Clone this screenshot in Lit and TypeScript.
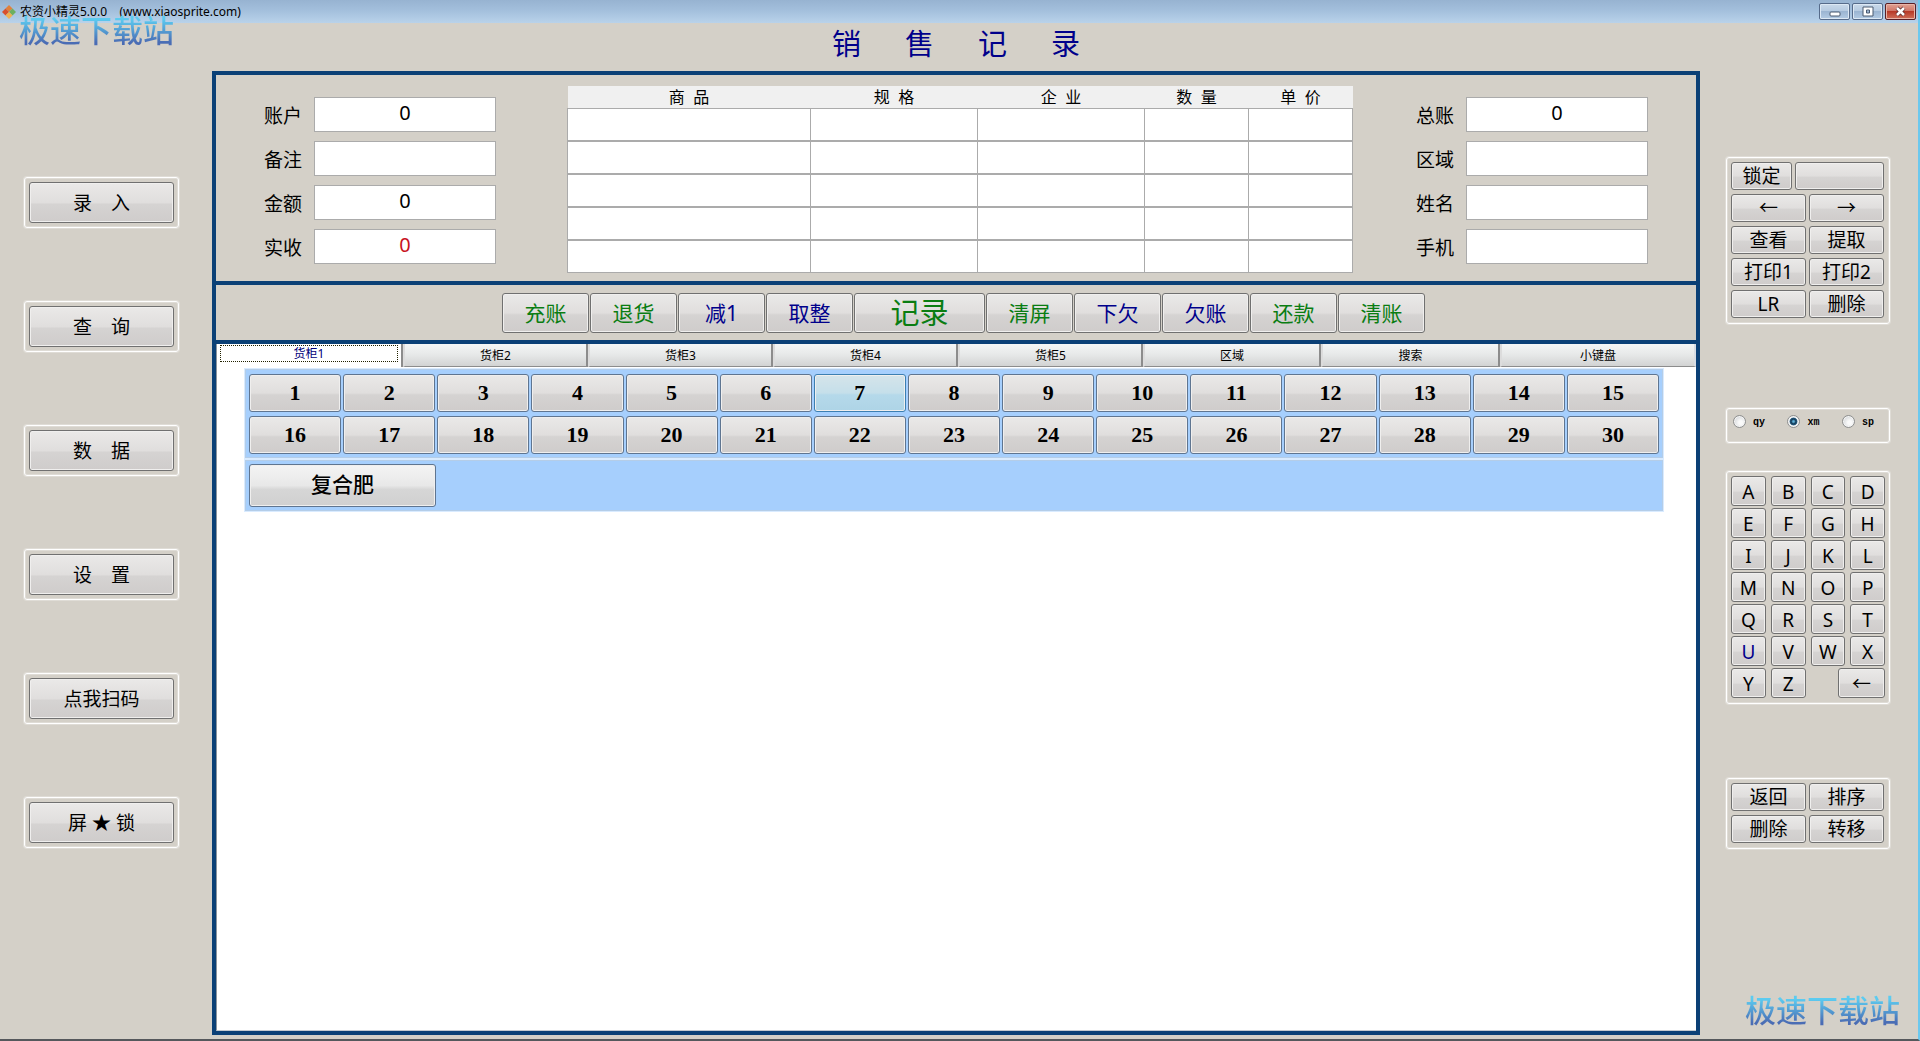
import { LitElement, html, css, nothing } from "lit";
import { customElement, state } from "lit/decorators.js";
import { classMap } from "lit/directives/class-map.js";

interface Field {
  id: string;
  label: string;
  value: string;
  alert?: boolean;
}

const ACCOUNT: Field[] = [
  { id: "account", label: "账户", value: "0" },
  { id: "remark", label: "备注", value: "" },
  { id: "amount", label: "金额", value: "0" },
  { id: "received", label: "实收", value: "0", alert: true },
];

const CUSTOMER: Field[] = [
  { id: "total", label: "总账", value: "0" },
  { id: "area", label: "区域", value: "" },
  { id: "name", label: "姓名", value: "" },
  { id: "phone", label: "手机", value: "" },
];

const MENU = ["录　入", "查　询", "数　据", "设　置", "点我扫码", "屏 ★ 锁"];
const COLUMNS = ["商  品", "规  格", "企  业", "数  量", "单  价"];
const ROWS = [0, 1, 2, 3, 4];

const ACTIONS: { text: string; tone: string }[] = [
  { text: "充账", tone: "green" },
  { text: "退货", tone: "green" },
  { text: "减1", tone: "navy" },
  { text: "取整", tone: "navy" },
  { text: "记录", tone: "green primary" },
  { text: "清屏", tone: "green" },
  { text: "下欠", tone: "navy" },
  { text: "欠账", tone: "navy" },
  { text: "还款", tone: "green" },
  { text: "清账", tone: "green" },
];

const TABS = ["货柜1", "货柜2", "货柜3", "货柜4", "货柜5", "区域", "搜索", "小键盘"];
const SLOTS = Array.from({ length: 30 }, (_, i) => i + 1);
const TOOLS = ["←", "→", "查看", "提取", "打印1", "打印2", "LR", "删除"];
const LETTERS = "ABCDEFGHIJKLMNOPQRSTUVWXYZ".split("");
const EDIT = ["返回", "排序", "删除", "转移"];
const MODES = ["qy", "xm", "sp"];

@customElement("app-root")
export class AppRoot extends LitElement {
  @state() private tab = 0;
  @state() private mode = "xm";

  static styles = css`
    :host {
      display: flex;
      flex-direction: column;
      position: relative;
      min-height: 100vh;
      box-sizing: border-box;
      background: #d4d0c8;
      border-right: 2px solid #6cc8ee;
      border-bottom: 2px solid #55585c;
      color: #000;
      font-family: "Noto Sans", "Noto Sans CJK SC", sans-serif;
      font-size: 19px;
      line-height: 24px;
    }
    * {
      box-sizing: border-box;
    }
    .titlebar {
      display: flex;
      align-items: center;
      height: 23px;
      padding: 0 2px;
      gap: 4px;
      background: linear-gradient(#97b3d1, #a3bfdc 45%, #b9d2ea);
    }
    .logo {
      width: 14px;
      height: 14px;
    }
    .caption {
      flex: 1;
      font-size: 12px;
      line-height: 16px;
      white-space: pre;
    }
    .window-controls {
      display: flex;
      gap: 2px;
    }
    .window-button {
      display: flex;
      align-items: center;
      justify-content: center;
      width: 31px;
      height: 17px;
      padding: 0;
      border: 1px solid #566b8a;
      border-radius: 2px;
      background: linear-gradient(#c9d9ea, #b4c9e0 50%, #9bb5d2 50%, #b3cbe4);
      box-shadow: inset 0 0 0 1px #dce8f4;
    }
    .window-button.close {
      border-color: #5a1f25;
      background: linear-gradient(#e0a294, #cf7263 50%, #b73a28 50%, #d0705a);
      box-shadow: inset 0 0 0 1px #e8b5a8;
    }
    .workspace {
      flex: 1;
      display: grid;
      grid-template-columns: 212px minmax(0, 1fr) 218px;
      padding-bottom: 4px;
    }
    .menu {
      display: flex;
      flex-direction: column;
      gap: 73px;
      padding: 154px 33px 0 24px;
    }
    .group {
      padding: 4px;
      border: 1px solid #fff;
      border-radius: 3px;
      box-shadow: 0 0 0 1px #dfdcd6, inset 0 0 0 1px #dfdcd6;
    }
    .button {
      min-width: 0;
      padding: 0;
      border: 1px solid #707070;
      border-radius: 3px;
      background: linear-gradient(#eae9e8, #e0dedd 50%, #d5d3d2 55%, #cfcccb);
      box-shadow: inset 0 0 0 1px #f0efee;
      color: #000;
      font-family: inherit;
      font-size: 19px;
      line-height: 24px;
      white-space: pre;
    }
    .menu .button {
      display: block;
      width: 100%;
      height: 41px;
    }
    .center {
      display: flex;
      flex-direction: column;
    }
    .heading {
      margin: 0;
      height: 48px;
      color: #00008b;
      font-size: 29px;
      font-weight: 400;
      line-height: 42px;
      text-align: center;
      white-space: pre;
    }
    .frame {
      flex: 1;
      display: flex;
      flex-direction: column;
      border: 4px solid #0b4076;
    }
    .entry {
      display: grid;
      grid-template-columns: auto minmax(0, 1fr) auto;
      align-items: start;
      padding: 11px 48px 8px 48px;
      border-bottom: 4px solid #0b4076;
    }
    .fields {
      display: grid;
      grid-template-columns: auto 182px;
      align-items: center;
      gap: 9px 12px;
      padding-top: 11px;
    }
    .field-label {
      padding-top: 2px;
      text-align: right;
    }
    .field-input {
      width: 100%;
      height: 35px;
      padding: 0 0 4px;
      border: 1px solid #ababab;
      border-radius: 0;
      background: #fff;
      color: #000;
      font-family: inherit;
      font-size: 20px;
      text-align: center;
    }
    .field-input.alert {
      color: #c8141e;
    }
    .table-area {
      padding: 0 63px 0 71px;
    }
    .items {
      width: 100%;
      table-layout: fixed;
      border-collapse: collapse;
    }
    .items th {
      height: 22px;
      padding: 0;
      background: #f0f0f0;
      font-size: 16px;
      font-weight: 400;
      line-height: 20px;
      white-space: pre;
    }
    .items td {
      height: 33px;
      padding: 0;
      border: 1px solid #ababab;
      border-bottom-width: 2px;
      background: #fff;
    }
    .items tr:last-child td {
      height: 32px;
      border-bottom-width: 1px;
    }
    .w-product {
      width: 243px;
    }
    .w-wide {
      width: 167px;
    }
    .w-narrow {
      width: 104px;
    }
    .actions {
      display: flex;
      justify-content: center;
      gap: 1px;
      padding: 8px 0 7px 15px;
      border-bottom: 4px solid #0b4076;
    }
    .actions .button {
      width: 87px;
      height: 40px;
      font-size: 21px;
    }
    .actions .button.primary {
      width: 131px;
      font-size: 29px;
      line-height: 32px;
    }
    .actions .green {
      color: #0a7d12;
    }
    .navy.navy {
      color: #00008b;
    }
    .tabs {
      display: grid;
      grid-template-columns: 187fr 185fr 185fr 185fr 185fr 178fr 179fr 196fr;
      height: 23px;
    }
    .tab {
      padding: 2px 0 0;
      border: 0;
      border-right: 2px solid #8c8c8c;
      border-bottom: 1px solid #8c8c8c;
      border-left: 2px solid #dcdcdc;
      background: linear-gradient(#f4f6f6, #e6e8e8 50%, #d2d3d3);
      color: #000;
      font-family: inherit;
      font-size: 12px;
      line-height: 16px;
    }
    .tab:last-child {
      border-right-color: #d8dde4;
    }
    .tab.selected {
      padding: 1px 3px 4px;
      border-left: 1px solid #8c959e;
      border-bottom: 0;
      background: #fff;
      color: #00007a;
    }
    .tab-text {
      display: block;
    }
    .selected .tab-text {
      border: 1px dotted #222200;
      line-height: 15px;
    }
    .sheet {
      flex: 1;
      padding: 1px 32px 0 27px;
      border-left: 1px solid #8c959e;
      border-bottom: 1px solid #c4cad0;
      background: #fff;
    }
    .tray {
      padding: 4px;
      border: 1px solid #d9ebff;
      background: #a6cffd;
      box-shadow: inset 0 0 0 1px #b4cde8;
    }
    .slots {
      display: grid;
      grid-template-columns: repeat(15, minmax(0, 1fr));
      gap: 4px 2px;
      padding-top: 5px;
    }
    .tray .button {
      height: 38px;
      border-color: #5f7590;
      font-family: "Liberation Serif", "Noto Sans CJK SC", serif;
      font-size: 22px;
      font-weight: 700;
    }
    .tray .button.hot {
      border-color: #3c7fb1;
      background: linear-gradient(#d5e4ea, #c5dfea 50%, #b5d9ea 55%, #aed4e6);
    }
    .tray .button.category {
      width: 187px;
      height: 43px;
      background: linear-gradient(#f4f4f4, #e8e8e8 50%, #d6d6d6 60%, #d0d0d0);
      font-size: 21px;
      font-weight: 500;
    }
    .side {
      display: flex;
      flex-direction: column;
      padding: 134px 28px 0 26px;
    }
    .side .button {
      height: 28px;
    }
    .tools {
      display: grid;
      gap: 4px;
      padding: 4px 5px 5px 4px;
    }
    .lock-row {
      display: grid;
      grid-template-columns: 61px 1fr;
      gap: 3px;
    }
    .pairs {
      display: grid;
      grid-template-columns: 1fr 1fr;
      gap: 4px 3px;
    }
    .modes {
      display: flex;
      align-items: flex-start;
      justify-content: space-between;
      height: 35px;
      margin-top: 84px;
      padding: 6px 15px 0 6px;
    }
    .mode {
      display: flex;
      align-items: flex-start;
      gap: 7px;
      font-family: "Liberation Mono", monospace;
      font-size: 10px;
      font-weight: 700;
      line-height: 16px;
    }
    .radio {
      appearance: none;
      width: 13px;
      height: 13px;
      margin: 0;
      border: 1px solid #8e8f8f;
      border-radius: 50%;
      background: radial-gradient(circle at 60% 60%, #fafafa 20%, #c4c8cc);
      box-shadow: inset 0 0 0 1px #f4f4f4;
    }
    .radio:checked {
      background: radial-gradient(circle, #5fb3dc 8%, #123a58 30%, #24597c 45%, #e8ecef 55%);
    }
    .letters {
      display: grid;
      grid-template-columns: repeat(4, 1fr);
      gap: 2px 5px;
      margin-top: 28px;
      padding-bottom: 5px;
    }
    .letters .button {
      height: 30px;
      padding-top: 2px;
      line-height: 26px;
    }
    .letters .backspace {
      grid-column: 3 / 5;
      justify-self: end;
      width: 47px;
    }
    .edit {
      margin-top: 74px;
      padding: 4px 5px 5px 4px;
    }
    .watermark {
      position: absolute;
      background: linear-gradient(#5ccbf0 20%, #4a6cb4 85%);
      background-clip: text;
      -webkit-background-clip: text;
      color: transparent;
      font-size: 31px;
      font-weight: 500;
      line-height: 36px;
      pointer-events: none;
    }
    .watermark.top {
      top: 12px;
      left: 19px;
    }
    .watermark.bottom {
      right: 18px;
      bottom: 11px;
    }
  `;

  private renderFields(fields: Field[]) {
    return html`<div class="fields">
      ${fields.map(
        (f) => html`<label class="field-label" for=${f.id}>${f.label}</label>
          <input
            id=${f.id}
            type="text"
            class=${classMap({ "field-input": true, alert: !!f.alert })}
            .value=${f.value}
          />`
      )}
    </div>`;
  }

  private renderTitlebar() {
    return html`<header class="titlebar">
      <svg class="logo" viewBox="0 0 14 14" aria-hidden="true">
        <path d="M7 0l3.5 3.5L7 7 3.5 3.5z" fill="#e0803c" />
        <path d="M3.5 3.5L7 7l-3.5 3.5L0 7z" fill="#d8502c" />
        <path d="M10.5 3.5L14 7l-3.5 3.5L7 7z" fill="#6cb060" />
        <path d="M7 7l3.5 3.5L7 14l-3.5-3.5z" fill="#f0b050" />
      </svg>
      <span class="caption">农资小精灵5.0.0    (www.xiaosprite.com)</span>
      <div class="window-controls">
        <button class="window-button" aria-label="最小化">
          <svg width="12" height="10" viewBox="0 0 12 10">
            <rect x="1" y="5" width="10" height="4" rx="1" fill="#fff" stroke="#4a5a70" />
          </svg>
        </button>
        <button class="window-button" aria-label="还原">
          <svg width="12" height="11" viewBox="0 0 12 11">
            <path
              d="M1 1h10v9H1zM4.5 4v3h3V4z"
              fill="#fff"
              fill-rule="evenodd"
              stroke="#4a5a70"
            />
          </svg>
        </button>
        <button class="window-button close" aria-label="关闭">
          <svg width="13" height="11" viewBox="0 0 13 11">
            <path d="M3 2l7 7M10 2l-7 7" stroke="#5a2a2c" stroke-width="4" />
            <path d="M3 2l7 7M10 2l-7 7" stroke="#fff" stroke-width="2.5" />
          </svg>
        </button>
      </div>
    </header>`;
  }

  render() {
    return html`
      ${this.renderTitlebar()}
      <div class="workspace">
        <nav class="menu">
          ${MENU.map((m) => html`<div class="group"><button class="button">${m}</button></div>`)}
        </nav>
        <main class="center">
          <h1 class="heading">销　  售　  记　  录</h1>
          <div class="frame">
            <section class="entry">
              ${this.renderFields(ACCOUNT)}
              <div class="table-area">
                <table class="items">
                  <colgroup>
                    <col class="w-product" />
                    <col class="w-wide" />
                    <col class="w-wide" />
                    <col class="w-narrow" />
                    <col class="w-narrow" />
                  </colgroup>
                  <thead>
                    <tr>
                      ${COLUMNS.map((c) => html`<th scope="col">${c}</th>`)}
                    </tr>
                  </thead>
                  <tbody>
                    ${ROWS.map(() => html`<tr>${COLUMNS.map(() => html`<td></td>`)}</tr>`)}
                  </tbody>
                </table>
              </div>
              ${this.renderFields(CUSTOMER)}
            </section>
            <div class="actions">
              ${ACTIONS.map((a) => html`<button class="button ${a.tone}">${a.text}</button>`)}
            </div>
            <div class="tabs" role="tablist">
              ${TABS.map(
                (t, i) => html`<button
                  role="tab"
                  aria-selected=${i === this.tab}
                  class=${classMap({ tab: true, selected: i === this.tab })}
                  @click=${() => (this.tab = i)}
                >
                  <span class="tab-text">${t}</span>
                </button>`
              )}
            </div>
            <section class="sheet" role="tabpanel">
              ${this.tab === 0
                ? html`<div class="tray slots">
                      ${SLOTS.map(
                        (n) => html`<button class=${classMap({ button: true, hot: n === 7 })}>${n}</button>`
                      )}
                    </div>
                    <div class="tray">
                      <button class="button category">复合肥</button>
                    </div>`
                : nothing}
            </section>
          </div>
        </main>
        <aside class="side">
          <div class="group tools">
            <div class="lock-row">
              <button class="button">锁定</button>
              <button class="button" aria-label="状态"></button>
            </div>
            <div class="pairs">${TOOLS.map((t) => html`<button class="button">${t}</button>`)}</div>
          </div>
          <div class="group modes">
            ${MODES.map(
              (m) => html`<label class="mode">
                <input
                  class="radio"
                  type="radio"
                  name="mode"
                  .checked=${m === this.mode}
                  @change=${() => (this.mode = m)}
                />${m}</label
              >`
            )}
          </div>
          <div class="group letters">
            ${LETTERS.map(
              (l) => html`<button class=${classMap({ button: true, navy: l === "U" })}>${l}</button>`
            )}
            <button class="button backspace">←</button>
          </div>
          <div class="group pairs edit">
            ${EDIT.map((t) => html`<button class="button">${t}</button>`)}
          </div>
        </aside>
      </div>
      <div class="watermark top">极速下载站</div>
      <div class="watermark bottom">极速下载站</div>
    `;
  }
}
